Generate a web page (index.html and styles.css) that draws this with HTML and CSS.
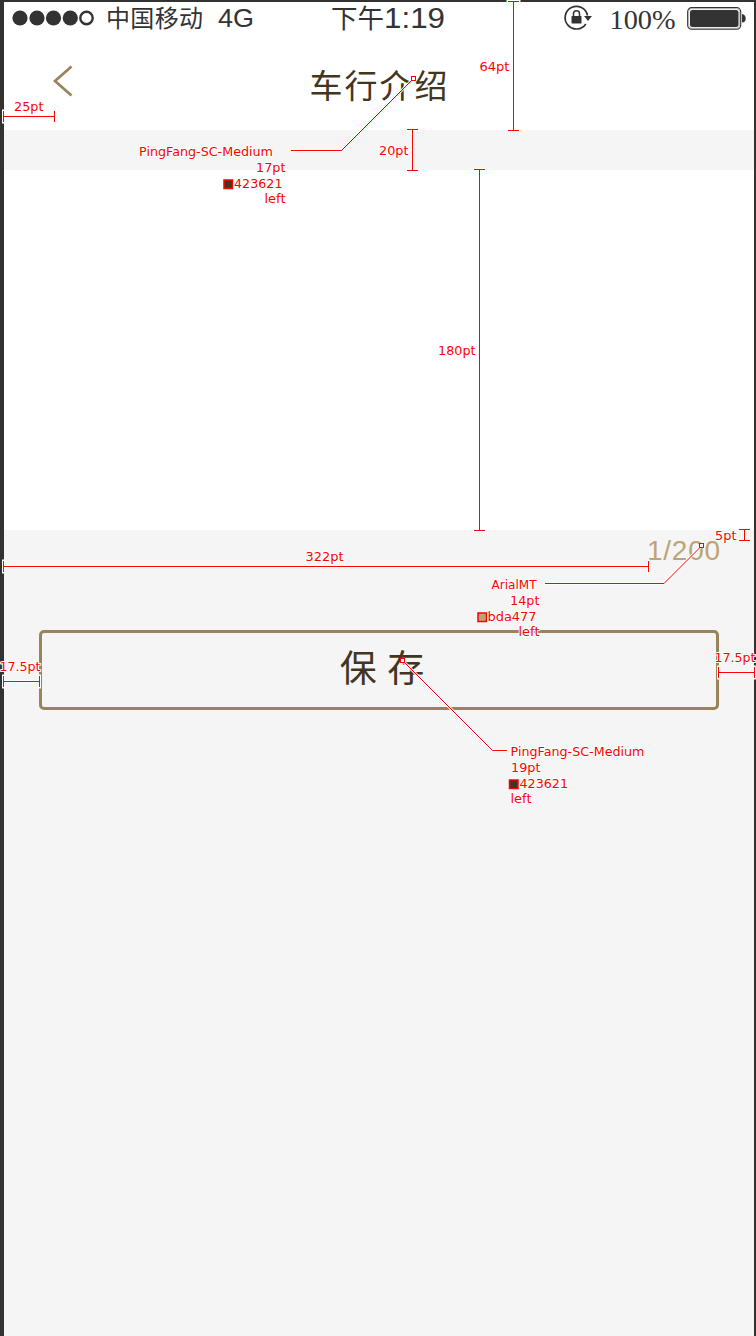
FILE: index.html
```html
<!DOCTYPE html>
<html lang="zh-CN">
<head>
<meta charset="utf-8">
<title>车行介绍</title>
<link rel="stylesheet" href="styles.css">
</head>
<body>
<div class="screen">
  <header class="header">
    <div class="status">
      <svg class="signal" width="84" height="16" viewBox="0 0 84 16"><g fill="#333"><circle cx="8" cy="8" r="7.6"/><circle cx="25" cy="8" r="7.6"/><circle cx="41.500" cy="8" r="7.600"/><circle cx="58.300" cy="8" r="7.600"/></g><circle cx="74.500" cy="8" r="6.200" fill="none" stroke="#333" stroke-width="2.400"/></svg>
      <svg class="status-text" width="756" height="40"><text x="106" y="27" font-size="24" textLength="97">中国移动</text><text x="218" y="26.500" font-size="26" textLength="36" lengthAdjust="spacingAndGlyphs">4G</text><text x="331" y="28" font-size="26.500">下午</text><text x="384" y="28" font-size="29" textLength="61" lengthAdjust="spacingAndGlyphs">1:19</text><text class="percent" x="609.500" y="29" font-size="28" textLength="66" lengthAdjust="spacingAndGlyphs">100%</text></svg>
      <svg class="lock" width="30" height="28" viewBox="563 4 30 28"><path d="M587.500 15.500A11.300 11.300 0 1 0 585.800 24" fill="none" stroke="#333" stroke-width="1.700"/><path d="M584 16h8l-4 5z" fill="#333"/><rect x="571.500" y="16" width="10" height="7.500" rx=".7" fill="#333"/><path d="M573.500 16v-2.200a3 3 0 0 1 6 0V16" fill="none" stroke="#333" stroke-width="1.500"/></svg>
      <svg class="battery" width="60" height="24" viewBox="686 6 60 24"><rect x="687.700" y="7.700" width="53" height="21.500" rx="4" fill="#fff" stroke="#333" stroke-width="1.200"/><rect x="688.700" y="8.700" width="51" height="19.500" rx="3" fill="none" stroke="#aaa" stroke-width=".8"/><rect x="690" y="10" width="48.500" height="17" rx="2.500" fill="#333"/><path d="M742 14q3.700.5 3.700 4.500T742 22.500z" fill="#333"/></svg>
    </div>
    <div class="navbar">
      <svg class="back" width="22" height="34" viewBox="52 64 22 34"><path d="M71.500 66.500 55 81l16.500 14.500" fill="none" stroke="#99835b" stroke-width="2.700"/></svg>
      <h1 class="title">车行介绍</h1>
    </div>
  </header>
  <div class="editor"></div>
  <div class="counter">1/200</div>
  <button class="save">保 存</button>
</div>

<svg class="notes" width="756" height="1336" viewBox="0 0 756 1336">
  <defs>
    <g id="measures">
      <path d="M3.500 111v11M3.500 116.500H54.500M54.500 111v11"/>
      <path d="M508 1.500h11M513.500 1.500V130.500M508 130.500h11"/>
      <path d="M407 129.500h11M412.500 129.500V170.500M407 170.500h11"/>
      <path d="M474 169.500h11M479.500 169.500V530.500M474 530.500h11"/>
      <path d="M3.500 561v11M3.500 566.500H648.500M648.500 561v11"/>
      <path d="M739 529.500h11M744.500 529.500V540.500M739 540.500h11"/>
      <path d="M3.500 676v11M3.500 681.500H39.500M39.500 676v11"/>
      <path d="M718.500 667v11M718.500 672.500H754.500M754.500 667v11"/>
    </g>
    <g id="leaders">
      <path d="M291 150.500H341.500L412 80"/>
      <path d="M545 583.500H664L701 546.500"/>
      <path d="M507 750.500H492.500L403.500 661.500"/>
    </g>
  </defs>
  <use href="#measures" class="halo"/>
  <use href="#leaders" class="halo soft"/>
  <use href="#measures" class="line"/>
  <use href="#leaders" class="leader"/>
  <path class="line" d="M291 150.500H342M545 583.500H664M492.500 750.500H507"/>
  <g class="anchor">
    <rect x="411.500" y="76.500" width="4" height="4"/>
    <rect x="699.500" y="543.500" width="4" height="4"/>
    <rect x="400.500" y="658.500" width="4" height="4"/>
  </g>
  <g class="swatch">
    <rect x="224" y="180" width="8.500" height="8.500" fill="#423621"/>
    <rect x="478" y="613" width="8.500" height="8.500" fill="#bda477"/>
    <rect x="509.500" y="780" width="8.500" height="8.500" fill="#423621"/>
  </g>
  <g class="labels">
    <text x="14" y="111" textLength="29.500" lengthAdjust="spacingAndGlyphs">25pt</text>
    <text x="479.500" y="71" textLength="30" lengthAdjust="spacingAndGlyphs">64pt</text>
    <text x="139" y="156" textLength="134" lengthAdjust="spacingAndGlyphs">PingFang-SC-Medium</text>
    <text x="256" y="172" textLength="29.500" lengthAdjust="spacingAndGlyphs">17pt</text>
    <text x="234" y="188" textLength="48.500" lengthAdjust="spacingAndGlyphs">423621</text>
    <text x="264.500" y="203" textLength="21" lengthAdjust="spacingAndGlyphs">left</text>
    <text x="379" y="155" textLength="29.500" lengthAdjust="spacingAndGlyphs">20pt</text>
    <text x="438" y="355" textLength="37.500" lengthAdjust="spacingAndGlyphs">180pt</text>
    <text x="305.500" y="561" textLength="38" lengthAdjust="spacingAndGlyphs">322pt</text>
    <text x="715" y="540" textLength="21.500" lengthAdjust="spacingAndGlyphs">5pt</text>
    <text x="491.500" y="589" textLength="45" lengthAdjust="spacingAndGlyphs">ArialMT</text>
    <text x="510" y="605" textLength="29.500" lengthAdjust="spacingAndGlyphs">14pt</text>
    <text x="487.500" y="621" textLength="49" lengthAdjust="spacingAndGlyphs">bda477</text>
    <text x="518.500" y="636" textLength="21" lengthAdjust="spacingAndGlyphs">left</text>
    <text x="-.5" y="671" textLength="41" lengthAdjust="spacingAndGlyphs">17.5pt</text>
    <text x="714.500" y="662" textLength="41" lengthAdjust="spacingAndGlyphs">17.5pt</text>
    <text x="510.500" y="756" textLength="134" lengthAdjust="spacingAndGlyphs">PingFang-SC-Medium</text>
    <text x="511" y="772" textLength="29.500" lengthAdjust="spacingAndGlyphs">19pt</text>
    <text x="519.500" y="788" textLength="48.500" lengthAdjust="spacingAndGlyphs">423621</text>
    <text x="510.500" y="803" textLength="21" lengthAdjust="spacingAndGlyphs">left</text>
  </g>
</svg>
</body>
</html>
```
FILE: styles.css
```css
* { box-sizing: border-box; }
body {
  margin: 0;
  width: 756px;
  height: 1336px;
  overflow: hidden;
  font-family: "Liberation Sans", "Noto Sans CJK SC", sans-serif;
}
.screen {
  display: flex;
  flex-direction: column;
  width: 756px;
  height: 1336px;
  border: solid #333231;
  border-width: 2px 2px 0 4px;
  background: #f5f5f5;
}
.header { height: 128px; background: #fff; }
.status { position: relative; height: 38px; }
.signal { position: absolute; left: 8px; top: 8px; }
.status-text { position: absolute; left: -4px; top: -2px; fill: #333; }
.percent { font-family: "Liberation Serif", serif; }
.lock { position: absolute; left: 559px; top: 2px; }
.battery { position: absolute; left: 682px; top: 4px; }
.navbar {
  display: grid;
  grid-template-columns: 100px 1fr 100px;
  height: 90px;
}
.back { margin: 24px 0 0 48px; }
.title {
  margin: 20px 0 0 1px;
  color: #423621;
  font-size: 33px;
  font-weight: 400;
  line-height: 54px;
  letter-spacing: 2px;
  text-align: center;
}
.editor { height: 360px; margin-top: 40px; background: #fff; }
.counter {
  height: 100px;
  padding: 4px 33px 0 0;
  color: #bda477;
  font-size: 28px;
  line-height: 34px;
  letter-spacing: .8px;
  text-align: right;
}
.save {
  height: 80px;
  margin: 0 35px;
  padding: 0 0 0 6px;
  border: 3px solid #99835b;
  border-radius: 5px;
  background: transparent;
  color: #423621;
  font: 37px/72px "Liberation Sans", "Noto Sans CJK SC", sans-serif;
}
.notes { position: absolute; left: 0; top: 0; }
.halo { fill: none; stroke: #fff; stroke-width: 3; stroke-linecap: square; }
.soft { stroke-opacity: .8; }
.line { fill: none; stroke: #f00; stroke-width: 1; shape-rendering: crispEdges; }
.leader { fill: none; stroke: #f00; stroke-width: 1; }
.anchor { fill: #fff; stroke: #f00; shape-rendering: crispEdges; }
.swatch { stroke: #f00; stroke-width: 1.5; }
.labels {
  fill: #f00;
  stroke: #fff;
  stroke-width: 2px;
  paint-order: stroke;
  stroke-linejoin: round;
  font: 13px "DejaVu Sans", sans-serif;
}
```
